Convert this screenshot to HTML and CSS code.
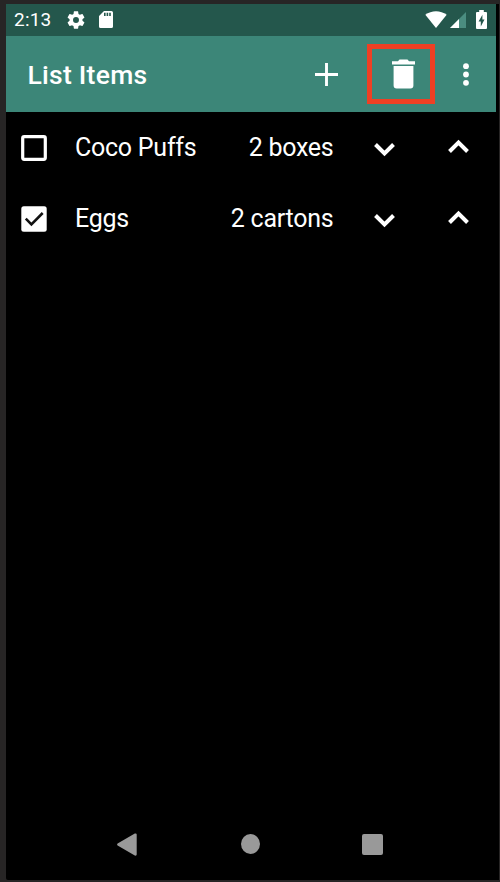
FILE: index.html
```html
<!DOCTYPE html>
<html lang="en">
<head>
<meta charset="utf-8">
<title>List Items</title>
<link rel="stylesheet" href="styles.css">
</head>
<body>
<div class="screen">
  <header class="status">
    <span class="time">2:13</span>
    <svg class="gear" viewBox="2 2 20 20"><path d="M19.14 12.94c.04-.3.06-.61.06-.94s-.02-.64-.07-.94l2.03-1.58c.18-.14.23-.41.12-.61l-1.92-3.32c-.12-.22-.37-.29-.59-.22l-2.39.96c-.5-.38-1.03-.7-1.62-.94L14.4 2.81c-.04-.24-.24-.41-.48-.41h-3.84c-.24 0-.43.17-.47.41l-.36 2.54c-.59.24-1.13.57-1.62.94l-2.39-.96c-.22-.08-.47 0-.59.22L2.74 8.87c-.12.21-.08.47.12.61l2.03 1.58c-.05.3-.09.63-.09.94s.02.64.07.94l-2.03 1.58c-.18.14-.23.41-.12.61l1.92 3.32c.12.22.37.29.59.22l2.39-.96c.5.38 1.03.7 1.62.94l.36 2.54c.05.24.24.41.48.41h3.84c.24 0 .44-.17.47-.41l.36-2.54c.59-.24 1.13-.56 1.62-.94l2.39.96c.22.08.47 0 .59-.22l1.92-3.32c.12-.22.07-.47-.12-.61zM12 15.300a3.300 3.300 0 1 1 0-6.600 3.300 3.300 0 0 1 0 6.600z"/></svg>
    <svg class="sd" viewBox="0 0 14 17"><path fill-rule="evenodd" d="M5 0h7.400A1.600 1.600 0 0 1 14 1.600v13.800a1.600 1.600 0 0 1-1.600 1.600H1.600A1.600 1.600 0 0 1 0 15.400V5zM5 1.700v3.300h1.600V1.700zM7.600 1.700v3.300h1.600V1.700zM10.200 1.700v3.300h1.600V1.700z"/></svg>
    <svg class="wifi" viewBox="0 0 22 17"><path d="M.3 3.700C6.500-1 15.500-1 21.700 3.700L11 17z"/></svg>
    <svg class="signal" viewBox="0 0 16 16"><path class="faint" d="M16 0v16H0z"/><path d="M9 7v9H0z"/></svg>
    <svg class="battery" viewBox="0 0 11 19"><path fill-rule="evenodd" d="M3.200 0h4.600v2H10a1 1 0 0 1 1 1v15a1 1 0 0 1-1 1H1a1 1 0 0 1-1-1V3a1 1 0 0 1 1-1h2.200zM6.400 4.800 2.600 11.500h2.200v5L8.500 9.500H6.400z"/></svg>
  </header>
  <div class="appbar">
    <h1>List Items</h1>
    <svg class="add" viewBox="0 0 23 23"><path d="M10.050 0h2.900v10.050H23v2.900H12.950V23h-2.900V12.950H0v-2.900h10.050z"/></svg>
    <div class="highlight"><svg class="trash" viewBox="0 0 23 30"><path d="M0 2.300h6L7.500.5h8L17 2.300h6v3.200H0zM1.600 7h19.800v19.500a3 3 0 0 1-3 3H4.600a3 3 0 0 1-3-3z"/></svg></div>
    <svg class="more" viewBox="0 0 6 23"><circle cx="3" cy="3.200" r="2.900"/><circle cx="3" cy="11.500" r="2.900"/><circle cx="3" cy="19.800" r="2.900"/></svg>
  </div>
  <main>
    <div class="row">
      <svg class="box" viewBox="0 0 26 26"><rect class="outline" x="1.700" y="1.700" width="22.600" height="22.600" rx="1.500"/></svg>
      <span class="name">Coco Puffs</span><span class="amount">2 boxes</span>
      <svg class="down" viewBox="0 0 21 13"><path class="chevron" d="m1.500 1.500 9 9 9-9"/></svg>
      <svg class="up" viewBox="0 0 21 13"><path class="chevron" d="m1.500 11.500 9-9 9 9"/></svg>
    </div>
    <div class="row">
      <svg class="box" viewBox="0 0 26 26"><rect x=".3" y=".3" width="25.400" height="25.400" rx="2.500"/><path class="tick" d="m4.800 12.700 5.600 5.600L21.700 7"/></svg>
      <span class="name">Eggs</span><span class="amount">2 cartons</span>
      <svg class="down" viewBox="0 0 21 13"><path class="chevron" d="m1.500 1.500 9 9 9-9"/></svg>
      <svg class="up" viewBox="0 0 21 13"><path class="chevron" d="m1.500 11.500 9-9 9 9"/></svg>
    </div>
  </main>
  <nav>
    <svg class="back" viewBox="0 0 20 23"><path d="M.6 10.600 17.800.5Q19.700 0 19.700 1.500v20q0 1.500-1.900 1L.6 12.400q-1-.9 0-1.800z"/></svg>
    <span class="home"></span>
    <span class="recent"></span>
  </nav>
</div>
</body>
</html>
```
FILE: styles.css
```css
* { box-sizing: border-box; }
body {
  margin: 0;
  height: 882px;
  padding: 4px 1px 2px 6px;
  background: #272525;
  font-family: Roboto, sans-serif;
  color: #fff;
  overflow: hidden;
}
svg { display: block; flex: none; fill: #fff; }
.screen {
  height: 876px;
  padding-right: 3px;
  display: flex;
  flex-direction: column;
  background: #000;
  border-bottom-left-radius: 2px;
}
.status {
  height: 32px;
  display: flex;
  align-items: center;
  padding: 0 9px 0 8px;
  background: #24574c;
}
.time { width: 53px; font-size: 19px; letter-spacing: .2px; line-height: 32px; }
.gear { width: 18px; height: 18px; margin-top: -1px; }
.sd { width: 14px; height: 17px; margin: -1px 0 0 14px; }
.wifi { width: 22px; height: 17px; margin: -2px 0 0 auto; }
.signal { width: 16px; height: 16px; margin: -1px 0 0 3px; }
.faint { fill: #4b8d80; }
.battery { width: 11px; height: 19px; margin: -1px 0 0 10px; }
.appbar {
  height: 76px;
  display: flex;
  align-items: center;
  padding-left: 21.5px;
  background: #3c8678;
}
h1 {
  width: 287.5px;
  margin: 0;
  font-size: 26.5px;
  font-weight: 500;
  letter-spacing: .25px;
  white-space: nowrap;
}
.add { width: 23px; height: 23px; }
.highlight {
  width: 68px;
  height: 60px;
  margin-left: 29px;
  padding: 10px 0 0 19.5px;
  border: 5px solid #ee4024;
}
.trash { width: 23px; height: 30px; }
.more { width: 6px; height: 23px; margin-left: 27.5px; }
.row {
  height: 71px;
  display: flex;
  align-items: center;
  padding-left: 15px;
  font-size: 25px;
  letter-spacing: -.25px;
}
.box { width: 26px; height: 26px; }
.outline { fill: none; stroke: #fff; stroke-width: 3.2; }
.tick { fill: none; stroke: #111; stroke-width: 2.6; }
.name { width: 140px; margin-left: 28px; }
.amount { width: 118.5px; margin-right: .5px; text-align: right; white-space: nowrap; }
.chevron { fill: none; stroke: #fff; stroke-width: 4; }
.down, .up { width: 21px; height: 13px; overflow: visible; }
.down { margin: 4px 0 0 40px; }
.up { margin: -3px 0 0 53px; }
nav {
  height: 72px;
  margin-top: auto;
  display: flex;
  align-items: center;
  padding-left: 111px;
}
.back { width: 20px; height: 23px; fill: #999; }
.home { width: 19px; height: 20px; margin-left: 104px; border-radius: 50%; background: #999; }
.recent { width: 21px; height: 21px; margin-left: 102.400px; border-radius: 2px; background: #999; }
```
